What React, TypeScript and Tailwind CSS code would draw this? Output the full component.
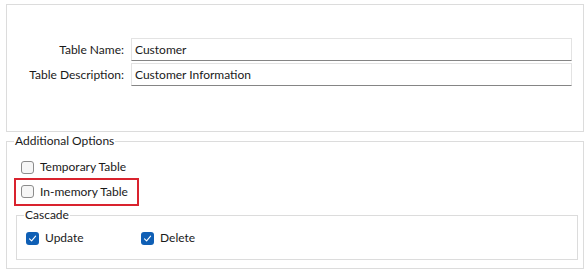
import React from 'react';

const Check: React.FC<{ checked?: boolean; label: string }> = ({ checked, label }) => (
  <label className="flex items-center gap-[6px] h-[20px]">
    {checked ? (
      <span className="flex items-center justify-center w-[13px] h-[13px] rounded-[3px] bg-[#0f5fb5]">
        <svg width="9" height="9" viewBox="0 0 9 9" fill="none">
          <path d="M1.5 4.8 L3.6 6.8 L7.6 2.2" stroke="white" strokeWidth="1.1" strokeLinecap="round" strokeLinejoin="round" />
        </svg>
      </span>
    ) : (
      <span className="w-[13px] h-[13px] rounded-[3px] border border-[#8c8c8c] bg-[#f6f6f6]" />
    )}
    <span>{label}</span>
  </label>
);

const App: React.FC = () => {
  return (
    <div className="w-[587px] h-[274px] bg-white text-[12px] text-[#1a1a1a] font-['Lato','Noto_Sans',sans-serif] pt-[4px] pl-[6px]">
      {/* table details */}
      <div className="w-[578px] h-[128px] border border-[#dcdcdc] pt-[33px]">
        <div className="grid grid-cols-[117px_441px] gap-x-[7px] gap-y-[2px] items-center">
          <div className="text-right">Table Name:</div>
          <div className="h-[23px] border border-[#e3e3e3] border-b-[#858585] flex items-center px-[3px]">Customer</div>
          <div className="text-right">Table Description:</div>
          <div className="h-[23px] border border-[#e3e3e3] border-b-[#858585] flex items-center px-[3px]">Customer Information</div>
        </div>
      </div>

      {/* additional options */}
      <fieldset className="w-[578px] h-[136px] mt-[1px] border border-[#dcdcdc] pl-[7px]">
        <legend className="px-[1px] leading-[16px]">Additional Options</legend>
        <div className="mt-[8px] flex flex-col">
          <div className="ml-[7px]">
            <Check label="Temporary Table" />
          </div>
          <div className="mt-[1px] w-[125px] h-[28px] border-2 border-[#d9232e] flex items-center pl-[5px] pb-[1px]">
            <Check label="In-memory Table" />
          </div>
        </div>
        <fieldset className="mt-[1px] ml-[2px] w-[562px] h-[53px] border border-[#dcdcdc] pl-[7px]">
          <legend className="px-[1px] leading-[16px]">Cascade</legend>
          <div className="flex mt-[5px] ml-[2px]">
            <div className="w-[115px]">
              <Check checked label="Update" />
            </div>
            <Check checked label="Delete" />
          </div>
        </fieldset>
      </fieldset>
    </div>
  );
};

export default App;
